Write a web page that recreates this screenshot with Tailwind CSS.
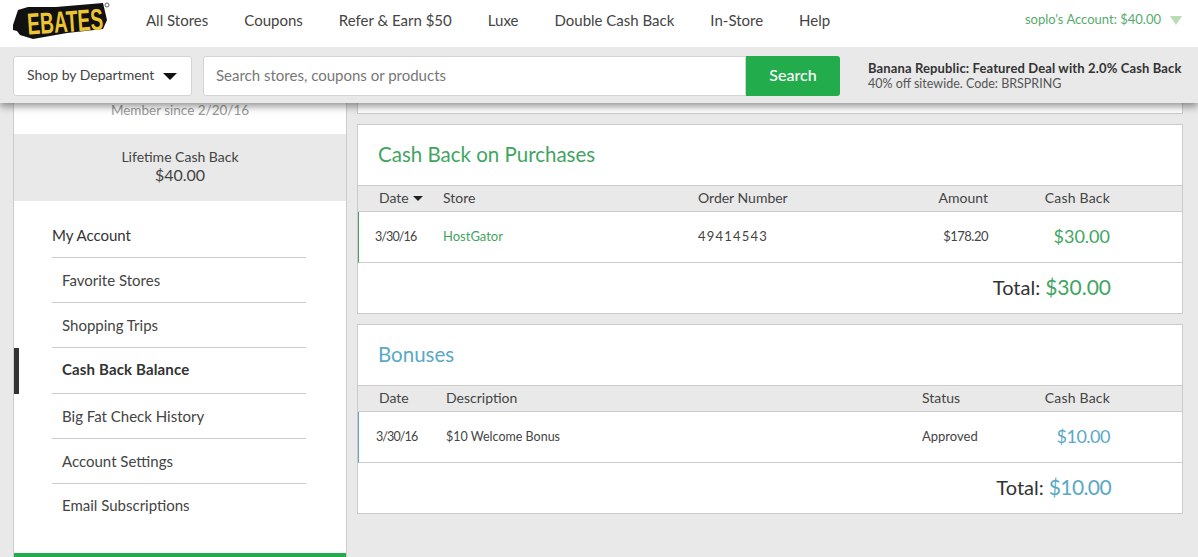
<!DOCTYPE html>
<html lang="en">
<head>
    <meta charset="UTF-8">
    <meta name="viewport" content="width=device-width, initial-scale=1.0">
    <title>Ebates - Cash Back Balance</title>
    <script src="https://cdn.jsdelivr.net/npm/@tailwindcss/browser@4"></script>
</head>
<body class="bg-[#e9e9e9] font-['Lato',sans-serif] text-[#333] h-[557px] overflow-hidden">
    <header class="relative z-10 shadow-[0_3px_8px_rgba(0,0,0,0.45)]">
        <div class="bg-white h-[47px] flex items-center pl-[13px] pr-4 pb-[7px]">
            <svg class="w-[98px] h-[47px] shrink-0 self-start overflow-visible" viewBox="0 0 98 47">
                <polygon fill="#111" points="0,25 5,10 15,7 43,7 90,3 94,20 90,29 54,33 20,39 7,35 4,31 0,30"/>
                <text x="14" y="32" fill="#ecc531" font-family="Liberation Sans" font-weight="700" font-size="30" textLength="76" lengthAdjust="spacingAndGlyphs" transform="rotate(-4 52 20)">EBATES</text>
                <circle cx="94" cy="5" r="2" fill="none" stroke="#666" stroke-width="1"/>
            </svg>
            <nav class="flex gap-9 ml-[35px] text-[15px] text-[#444]">
                <a>All Stores</a>
                <a>Coupons</a>
                <a>Refer &amp; Earn $50</a>
                <a>Luxe</a>
                <a>Double Cash Back</a>
                <a>In-Store</a>
                <a>Help</a>
            </nav>
            <div class="ml-auto flex items-center gap-[9px] text-[13px] text-[#56ab6c]">
                <span>soplo's Account: $40.00</span>
                <span class="w-0 h-0 border-x-[6px] border-x-transparent border-t-[9px] border-t-[#bcdcb4]"></span>
            </div>
        </div>
        <div class="bg-[#e9e9e9] h-[56px] flex items-center pl-[13px] pt-[2px]">
            <button class="w-[179px] h-10 bg-white border border-[#d4d4d4] rounded-[3px] flex items-center justify-between pl-[13px] pr-[14px] pb-[2px] text-sm text-[#444]">
                Shop by Department
                <span class="w-0 h-0 border-x-[7px] border-x-transparent border-t-[7px] border-t-[#111] mt-[2px]"></span>
            </button>
            <div class="ml-[11px] w-[637px] h-10 flex">
                <div class="flex-1 bg-white border border-[#d4d4d4] rounded-l-[3px] flex items-center pl-3 pb-[2px] text-[15px] text-[#777]">Search stores, coupons or products</div>
                <button class="w-[94px] bg-[#22ac4c] rounded-r-[3px] pb-[2px] text-white text-base font-medium">Search</button>
            </div>
            <div class="ml-[28px] leading-[15px]">
                <p class="font-bold text-[13px] tracking-[0.01em] text-[#333]">Banana Republic: Featured Deal with 2.0% Cash Back</p>
                <p class="text-[12.5px] text-[#555]">40% off sitewide. Code: BRSPRING</p>
            </div>
        </div>
    </header>

    <main class="flex items-start pl-[13px] gap-[10px]">
        <aside class="w-[334px] h-[454px] bg-white border-x border-[#ccc] flex flex-col">
            <p class="text-center text-[13.5px] text-[#999] h-[31px] leading-[15px]">Member since 2/20/16</p>
            <div class="bg-[#e9e9e9] h-[67px] flex flex-col items-center justify-center pb-[3px]">
                <p class="text-sm leading-[17px] text-[#444]">Lifetime Cash Back</p>
                <p class="text-base leading-[20px] text-[#444]">$40.00</p>
            </div>
            <ul class="relative flex-1 pl-[38px] pr-[40px] pt-[13px] text-[15px] text-[#444]">
                <li class="h-[44px] flex items-center border-b border-[#ccc] text-[#333]">My Account</li>
                <li class="h-[45px] flex items-center pl-[10px] border-b border-[#ccc]">Favorite Stores</li>
                <li class="h-[45px] flex items-center pl-[10px] border-b border-[#ccc]">Shopping Trips</li>
                <li class="h-[46px] flex items-center pl-[10px] pb-[2px] border-b border-[#ccc] font-bold tracking-[0.01em] text-[#333]">
                    <span class="absolute left-0 w-[5px] h-[46px] bg-[#333] mt-[3px]"></span>
                    Cash Back Balance
                </li>
                <li class="h-[45px] flex items-center pl-[10px] border-b border-[#ccc]">Big Fat Check History</li>
                <li class="h-[45px] flex items-center pl-[10px] border-b border-[#ccc]">Account Settings</li>
                <li class="h-[45px] flex items-center pl-[10px] pb-[2px]">Email Subscriptions</li>
            </ul>
            <div class="h-1 bg-[#22ac4c]"></div>
        </aside>

        <section class="w-[826px] flex flex-col gap-[10px]">
            <div class="h-[11px] bg-white border-x border-b border-[#ccc]"></div>

            <article class="h-[190px] bg-white border border-[#ccc]">
                <h2 class="h-[60px] flex items-center pl-5 pb-0.5 text-[20.5px] text-[#3fa561]">Cash Back on Purchases</h2>
                <div class="h-[27px] bg-[#e9e9e9] border-y border-[#ccc] flex items-center pb-[2px] text-sm text-[#444]">
                    <span class="w-[85px] pl-[21px] flex items-center gap-[4px]">Date <span class="w-0 h-0 border-x-[5px] border-x-transparent border-t-[5px] border-t-[#222] mt-[2px]"></span></span>
                    <span class="w-[255px]">Store</span>
                    <span class="w-[182px]">Order Number</span>
                    <span class="w-[108px] text-right">Amount</span>
                    <span class="w-[122px] text-right tracking-[0.2px]">Cash Back</span>
                </div>
                <div class="h-[51px] border-b border-[#ccc] border-l border-l-[#3fa561] flex items-center text-[13px] text-[#444]">
                    <span class="w-[84px] pl-4 text-[12.5px] tracking-[-0.9px]">3/30/16</span>
                    <span class="w-[255px] text-[#3fa561]">HostGator</span>
                    <span class="w-[182px] tracking-[1.2px]">49414543</span>
                    <span class="w-[108px] text-right tracking-[-0.5px]">$178.20</span>
                    <span class="w-[122px] text-right pb-[2px] text-[18px] text-[#3fa561]">$30.00</span>
                </div>
                <div class="h-[50px] flex items-center justify-end pr-[71px] pb-0.5 text-xl gap-[5px]">
                    <span>Total:</span><span class="text-[21px] text-[#3fa561]">$30.00</span>
                </div>
            </article>

            <article class="h-[190px] bg-white border border-[#ccc]">
                <h2 class="h-[60px] flex items-center pl-5 pb-0.5 text-[20.5px] text-[#5aa9c6]">Bonuses</h2>
                <div class="h-[27px] bg-[#e9e9e9] border-y border-[#ccc] flex items-center pb-[2px] text-sm text-[#444]">
                    <span class="w-[88px] pl-[21px]">Date</span>
                    <span class="w-[476px]">Description</span>
                    <span class="w-[120px]">Status</span>
                    <span class="w-[68px] text-right whitespace-nowrap tracking-[0.2px]">Cash Back</span>
                </div>
                <div class="h-[51px] border-b border-[#ccc] border-l border-l-[#5aa9c6] flex items-center text-[13px] text-[#444]">
                    <span class="w-[87px] pl-[17px] text-[12.5px] tracking-[-0.9px]">3/30/16</span>
                    <span class="w-[476px] text-[12.5px]">$10 Welcome Bonus</span>
                    <span class="w-[120px]">Approved</span>
                    <span class="w-[68px] text-right pb-[2px] text-[18px] tracking-[-0.5px] text-[#5aa9c6]">$10.00</span>
                </div>
                <div class="h-[50px] flex items-center justify-end pr-[71px] pb-0.5 text-xl gap-[5px]">
                    <span>Total:</span><span class="text-[21px] tracking-[-0.6px] text-[#5aa9c6]">$10.00</span>
                </div>
            </article>
        </section>
    </main>
</body>
</html>
